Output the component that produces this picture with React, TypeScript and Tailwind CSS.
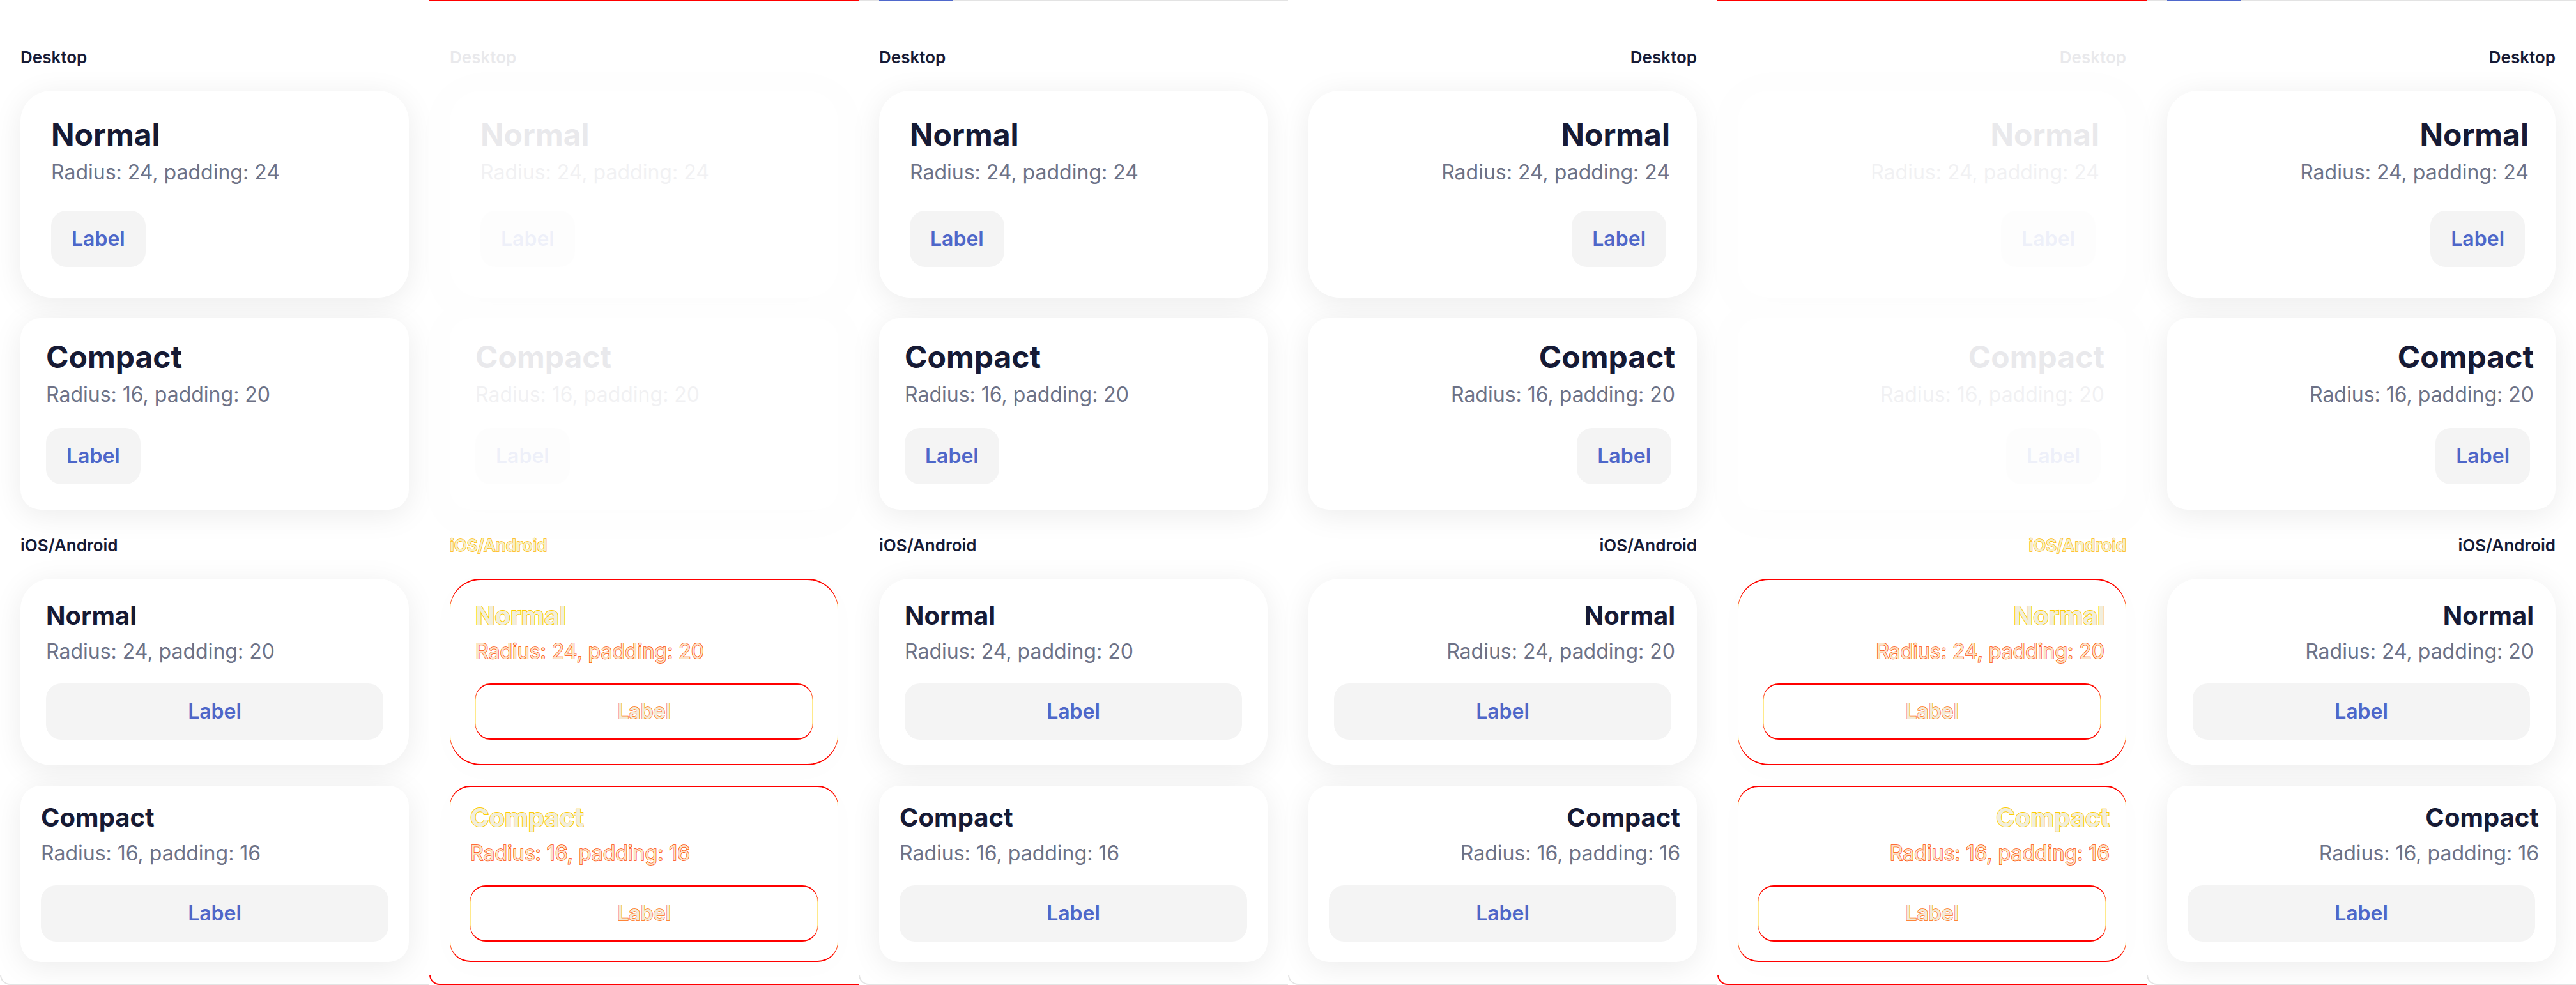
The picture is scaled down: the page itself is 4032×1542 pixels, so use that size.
import React from 'react';

type Dir = 'ltr' | 'rtl';
type Top = 'none' | 'red' | 'progress';

type Spec = {
  card: string;
  title: string;
  btnGap: string;
  full: boolean;
  titleText: string;
  sub: string;
};

const desktopSpecs: Spec[] = [
  {
    card: 'rounded-[48px] p-[48px]',
    title: 'text-[48px] leading-[42px]',
    btnGap: 'mt-[40px]',
    full: false,
    titleText: 'Normal',
    sub: 'Radius: 24, padding: 24',
  },
  {
    card: 'rounded-[32px] p-[40px]',
    title: 'text-[48px] leading-[42px]',
    btnGap: 'mt-[32px]',
    full: false,
    titleText: 'Compact',
    sub: 'Radius: 16, padding: 20',
  },
];

const iosSpecs: Spec[] = [
  {
    card: 'rounded-[48px] p-[40px]',
    title: 'text-[40px] leading-[36px]',
    btnGap: 'mt-[30px]',
    full: true,
    titleText: 'Normal',
    sub: 'Radius: 24, padding: 20',
  },
  {
    card: 'rounded-[32px] p-[32px]',
    title: 'text-[40px] leading-[36px]',
    btnGap: 'mt-[30px]',
    full: true,
    titleText: 'Compact',
    sub: 'Radius: 16, padding: 16',
  },
];

function Card({ spec, dir, diff }: { spec: Spec; dir: Dir; diff: boolean }) {
  const cardSkin = diff
    ? 'bg-white shadow-[inset_0_2px_0_#ff0000,inset_0_-2px_0_#ff0000,inset_1px_0_0_#ffe98a,inset_-1px_0_0_#ffe98a,0_8px_48px_rgba(0,0,0,0.015)]'
    : 'bg-white shadow-[0_8px_48px_rgba(0,0,0,0.08)]';
  const titleSkin = diff
    ? 'text-[#f1eedd] [-webkit-text-stroke:2px_#ffcc00] [paint-order:stroke_fill]'
    : 'text-[#161a35]';
  const subSkin = diff
    ? 'text-[#fbe3c8] [-webkit-text-stroke:1.5px_#ff4a00] [paint-order:stroke_fill]'
    : 'text-[#6d7287]';
  const btnSkin = diff
    ? 'bg-white shadow-[inset_0_2px_0_#ff0000,inset_0_-2px_0_#ff0000,inset_1px_0_0_#ffe98a,inset_-1px_0_0_#ffe98a] text-[#f3ead8] [-webkit-text-stroke:1.5px_#ff6a00] [paint-order:stroke_fill]'
    : 'bg-[#f4f4f4] text-[#4e67c9]';
  const btnPlace = spec.full ? 'w-full' : dir === 'rtl' ? 'self-end px-[32px]' : 'self-start px-[32px]';
  return (
    <div className={`flex flex-col ${spec.card} ${cardSkin}`}>
      <div className={`flex flex-col ${dir === 'rtl' ? 'text-right -mr-[6px]' : 'text-left'}`}>
        <div className={`font-bold ${spec.title} ${titleSkin}`}>{spec.titleText}</div>
        <div className={`mt-[18px] text-[32px] leading-[40px] font-normal ${subSkin}`}>{spec.sub}</div>
      </div>
      <div
        className={`${spec.btnGap} ${btnPlace} h-[88px] rounded-[24px] flex items-center justify-center text-[32px] leading-[40px] font-semibold ${btnSkin}`}
      >
        Label
      </div>
    </div>
  );
}

function SectionLabel({ text, dir, diff }: { text: string; dir: Dir; diff: boolean }) {
  const skin = diff
    ? 'text-[#f6efc8] [-webkit-text-stroke:1.5px_#ffb800] [paint-order:stroke_fill]'
    : 'text-[#161a35]';
  return (
    <div
      className={`text-[26px] leading-[32px] font-semibold mb-[36px] ${dir === 'rtl' ? 'text-right' : 'text-left'} ${skin}`}
    >
      {text}
    </div>
  );
}

function Column({ dir, diff, top }: { dir: Dir; diff: boolean; top: Top }) {
  const bottomColor = diff ? 'border-[#ff0000]' : 'border-[#e4e4e4]';
  return (
    <div className="w-[672px] h-[1542px] flex flex-col bg-white shrink-0">
      {top === 'none' && <div className="h-[2px]" />}
      {top === 'red' && <div className="h-[2px] bg-[#ff0000]" />}
      {top === 'progress' && (
        <div className="h-[2px] bg-[#e3e3e3] flex">
          <div className="ml-[32px] w-[116px] h-full bg-[#4f68cc]" />
        </div>
      )}
      <div className="flex-1 flex flex-col px-[32px] pt-[72px]">
        <div className={`flex flex-col ${diff ? 'opacity-[0.09]' : ''}`}>
          <SectionLabel text="Desktop" dir={dir} diff={false} />
          <div className="flex flex-col gap-[32px]">
            {desktopSpecs.map((s) => (
              <Card key={s.titleText} spec={s} dir={dir} diff={false} />
            ))}
          </div>
        </div>
        <div className="flex flex-col mt-[40px]">
          <SectionLabel text="iOS/Android" dir={dir} diff={diff} />
          <div className="flex flex-col gap-[32px]">
            {iosSpecs.map((s) => (
              <Card key={s.titleText} spec={s} dir={dir} diff={diff} />
            ))}
          </div>
        </div>
      </div>
      <div className={`h-[16px] border-l-2 border-b-2 rounded-bl-[16px] ${bottomColor}`} />
    </div>
  );
}

export default function App() {
  return (
    <div className="flex w-[4032px] h-[1542px] bg-white overflow-hidden font-['Inter',sans-serif]">
      <Column dir="ltr" diff={false} top="none" />
      <Column dir="ltr" diff={true} top="red" />
      <Column dir="ltr" diff={false} top="progress" />
      <Column dir="rtl" diff={false} top="none" />
      <Column dir="rtl" diff={true} top="red" />
      <Column dir="rtl" diff={false} top="progress" />
    </div>
  );
}
